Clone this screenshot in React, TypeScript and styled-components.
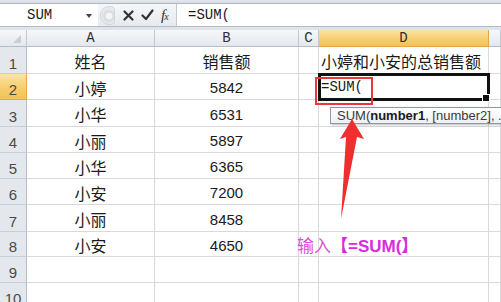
import React from 'react';
import styled, { createGlobalStyle, css } from 'styled-components';

const GlobalStyle = createGlobalStyle`
  html, body {
    margin: 0;
    padding: 0;
    background: #ffffff;
  }
  * {
    box-sizing: border-box;
  }
`;

const COLS = [27, 128, 144, 20, 170, 12];
const ROW_HEIGHTS = [27, 26, 27, 26, 26, 26, 27, 25, 26, 26];

const Page = styled.div`
  position: relative;
  width: 501px;
  height: 302px;
  overflow: hidden;
  background: #dfe4ea;
  font-family: 'Liberation Sans', Arial, sans-serif;
`;

const TopStrip = styled.div`
  height: 4px;
  background: linear-gradient(#e4e8ee, #d9dee5);
  border-bottom: 1px solid #aeb6c1;
`;

const FormulaBar = styled.div`
  display: flex;
  height: 23px;
  border-bottom: 1px solid #b3bac5;
`;

const NameBox = styled.div`
  width: 98px;
  display: flex;
  align-items: center;
  justify-content: space-between;
  padding: 0 6px 0 27px;
  background: #ffffff;
  font-family: 'Liberation Mono', monospace;
  font-size: 14px;
  color: #1a1a1a;
`;

const DropTriangle = styled.span`
  width: 0;
  height: 0;
  border-left: 3.5px solid transparent;
  border-right: 3.5px solid transparent;
  border-top: 4px solid #444;
  margin-top: 1px;
`;

const Controls = styled.div`
  width: 79px;
  display: flex;
  align-items: center;
  gap: 8px;
  padding-left: 2px;
  background: linear-gradient(#f6f7f9, #e6e9ee);
  border-right: 1px solid #c3c9d2;
`;

const Grip = styled.span`
  width: 15px;
  height: 19px;
  border-radius: 9px 4px 4px 9px;
  background: radial-gradient(circle at 8px 9px, #f4f5f7 0 3px, #d6dae0 4px, #e9ecf0 8px);
  border: 1px solid #d2d6dc;
`;

const IconGroup = styled.div`
  display: flex;
  align-items: center;
  gap: 7px;
`;

const FxLabel = styled.span`
  font-family: 'Liberation Serif', serif;
  font-style: italic;
  font-size: 15px;
  color: #333;
  letter-spacing: -1px;

  small {
    font-size: 10px;
  }
`;

const FormulaInput = styled.div`
  flex: 1;
  display: flex;
  align-items: center;
  padding-left: 11px;
  background: #ffffff;
  font-family: 'Liberation Mono', monospace;
  font-size: 14px;
  color: #1a1a1a;
`;

const Gap = styled.div`
  height: 3px;
`;

const Sheet = styled.div`
  display: grid;
  grid-template-columns: ${COLS.map((c) => `${c}px`).join(' ')};
  grid-template-rows: 17px ${ROW_HEIGHTS.map((r) => `${r}px`).join(' ')};
  background: #ffffff;
`;

const activeHeader = css`
  background: linear-gradient(#fbe3a4, #f6cd6a 60%, #f3c25a);
  border-right-color: #e2a843;
  border-bottom-color: #e2a843;
`;

const ColHeader = styled.div<{ $active?: boolean }>`
  display: flex;
  align-items: center;
  justify-content: center;
  background: linear-gradient(#f6f7f9, #e4e8ed);
  border-right: 1px solid #c2c8d1;
  border-bottom: 1px solid #b5bcc7;
  font-family: 'Liberation Mono', monospace;
  font-size: 14px;
  color: #2f2f2f;
  ${({ $active }) => $active && activeHeader}
`;

const Corner = styled(ColHeader)`
  justify-content: flex-end;
  align-items: flex-end;
  padding: 0 5px 3px 0;
`;

const CornerMark = styled.span`
  width: 0;
  height: 0;
  border-left: 8px solid transparent;
  border-bottom: 8px solid #c9ced6;
`;

const RowHeader = styled.div<{ $active?: boolean }>`
  display: flex;
  align-items: flex-end;
  justify-content: center;
  padding-bottom: 1px;
  background: #e4e8ed;
  border-right: 1px solid #b5bcc7;
  border-bottom: 1px solid #c8ced6;
  font-size: 15px;
  color: #4a4a4a;
  ${({ $active }) => $active && activeHeader}
`;

const Cell = styled.div<{ $align?: 'left' | 'center'; $selected?: boolean; $cjk?: boolean }>`
  position: relative;
  display: flex;
  align-items: center;
  justify-content: ${({ $align }) => ($align === 'left' ? 'flex-start' : 'center')};
  padding: 2px 2px 0;
  border-right: 1px solid #d9d9d9;
  border-bottom: 1px solid #d9d9d9;
  font-family: ${({ $cjk }) =>
    $cjk ? "'Noto Sans CJK SC', sans-serif" : "'Liberation Sans', Arial, sans-serif"};
  font-size: ${({ $cjk }) => ($cjk ? '16px' : '15px')};
  color: #1a1a1a;
  white-space: nowrap;

  ${({ $selected }) =>
    $selected &&
    css`
      z-index: 2;
      outline: 3px solid #111;
      outline-offset: -2px;
      padding-top: 0;
      font-family: 'Liberation Mono', monospace;
      font-size: 14px;

      &::after {
        content: '';
        position: absolute;
        right: -2px;
        bottom: -3px;
        width: 6px;
        height: 6px;
        background: #111;
        border: 1px solid #fff;
      }
    `}
`;

const Highlight = styled.div`
  position: absolute;
  left: 315px;
  top: 77px;
  width: 58px;
  height: 28px;
  border: 2px solid #e8373d;
  z-index: 5;
`;

const Tooltip = styled.div`
  position: absolute;
  left: 330px;
  top: 107px;
  width: 190px;
  height: 17px;
  padding: 0 0 0 6px;
  display: flex;
  align-items: center;
  background: linear-gradient(#ffffff, #eef0f5);
  border: 1px solid #8f97a3;
  box-shadow: 1px 1px 2px rgba(0, 0, 0, 0.25);
  font-size: 13px;
  color: #3a3a3a;
  white-space: nowrap;
  z-index: 4;

  b {
    color: #1a1a1a;
  }
`;

const Arrow = styled.svg`
  position: absolute;
  left: 0;
  top: 0;
  z-index: 6;
  pointer-events: none;
`;

const Note = styled.div`
  position: absolute;
  left: 297px;
  top: 232px;
  font-family: 'Noto Sans CJK SC', 'Liberation Sans', sans-serif;
  font-size: 17px;
  color: #db4fdc;
  white-space: nowrap;
  z-index: 6;

  strong {
    font-family: 'Liberation Sans', 'Noto Sans CJK SC', sans-serif;
    font-weight: 700;
    color: #d92bdc;
  }
`;

const names = ['小婷', '小华', '小丽', '小华', '小安', '小丽', '小安'];
const sales = ['5842', '6531', '5897', '6365', '7200', '8458', '4650'];

const App: React.FC = () => {
  const rows = ROW_HEIGHTS.map((_, i) => {
    const n = i + 1;
    let a = '';
    let b = '';
    let bCjk = false;
    if (n === 1) {
      a = '姓名';
      b = '销售额';
      bCjk = true;
    } else if (n <= 8) {
      a = names[n - 2];
      b = sales[n - 2];
    }
    return (
      <React.Fragment key={n}>
        <RowHeader $active={n === 2}>{n}</RowHeader>
        <Cell $cjk>{a}</Cell>
        <Cell $cjk={bCjk}>{b}</Cell>
        <Cell />
        {n === 1 ? (
          <Cell $cjk $align="left">小婷和小安的总销售额</Cell>
        ) : n === 2 ? (
          <Cell $selected $align="left">=SUM(</Cell>
        ) : (
          <Cell />
        )}
        <Cell />
      </React.Fragment>
    );
  });

  return (
    <Page>
      <GlobalStyle />
      <TopStrip />
      <FormulaBar>
        <NameBox>
          SUM
          <DropTriangle />
        </NameBox>
        <Controls>
          <Grip />
          <IconGroup>
            <svg width="11" height="11" viewBox="0 0 11 11">
              <path d="M1.5 1.5 L9.5 9.5 M9.5 1.5 L1.5 9.5" stroke="#333" strokeWidth="2.2" strokeLinecap="round" />
            </svg>
            <svg width="13" height="12" viewBox="0 0 13 12">
              <path d="M1.5 6.5 L5 10 L11.5 1.5" stroke="#333" strokeWidth="2.2" fill="none" strokeLinecap="round" strokeLinejoin="round" />
            </svg>
            <FxLabel>
              f<small>x</small>
            </FxLabel>
          </IconGroup>
        </Controls>
        <FormulaInput>=SUM(</FormulaInput>
      </FormulaBar>
      <Gap />
      <Sheet>
        <Corner>
          <CornerMark />
        </Corner>
        <ColHeader>A</ColHeader>
        <ColHeader>B</ColHeader>
        <ColHeader>C</ColHeader>
        <ColHeader $active>D</ColHeader>
        <ColHeader />
        {rows}
      </Sheet>

      <Highlight />
      <Tooltip>
        SUM(<b>number1</b>, [number2], ...)
      </Tooltip>
      <Arrow width="501" height="302" viewBox="0 0 501 302">
        <polygon points="352,119 364,139 357,137 341,219 346,137 340,139" fill="#ef2f2f" />
      </Arrow>
      <Note>
        输入<strong>【=SUM(】</strong>
      </Note>
    </Page>
  );
};

export default App;
